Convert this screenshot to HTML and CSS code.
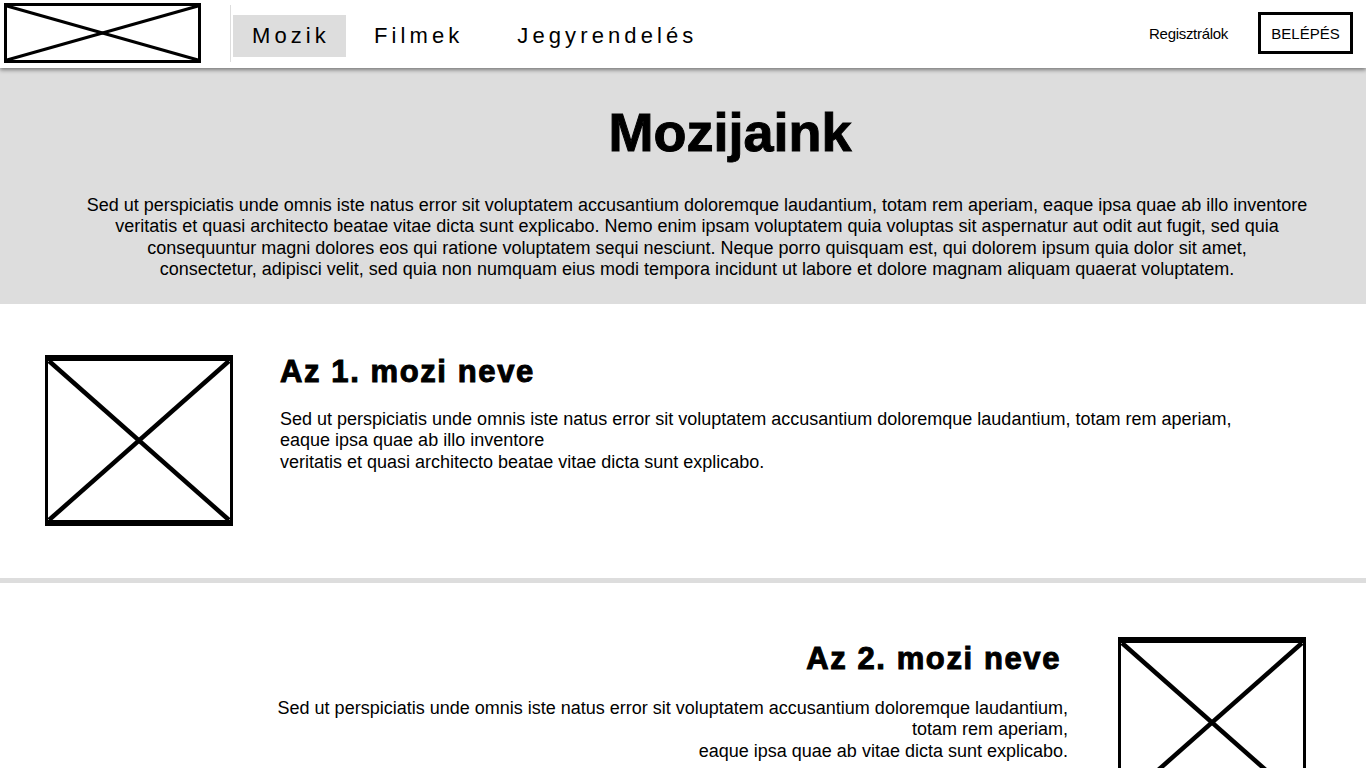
FILE: index.html
```html
<!DOCTYPE html>
<html lang="hu">
<head>
<meta charset="utf-8">
<title>Mozijaink</title>
<link rel="stylesheet" href="styles.css">
</head>
<body>
<header class="topbar">
  <div class="logo">
    <svg width="197" height="60" viewBox="0 0 197 60">
      <rect x="1.5" y="1.5" width="194" height="57" fill="#fff" stroke="#000" stroke-width="3"/>
      <line x1="3" y1="3" x2="194" y2="57" stroke="#000" stroke-width="3"/>
      <line x1="194" y1="3" x2="3" y2="57" stroke="#000" stroke-width="3"/>
    </svg>
  </div>
  <div class="sep"></div>
  <nav class="nav">
    <a class="nav-item active">Mozik</a>
    <a class="nav-item">Filmek</a>
    <a class="nav-item nav-item--far">Jegyrendelés</a>
  </nav>
  <div class="auth">
    <a class="register">Regisztrálok</a>
    <a class="login">BELÉPÉS</a>
  </div>
</header>

<section class="hero">
  <h1 class="hero-title">Mozijaink</h1>
  <p class="hero-text">Sed ut perspiciatis unde omnis iste natus error sit voluptatem accusantium doloremque laudantium, totam rem aperiam, eaque ipsa quae ab illo inventore<br>veritatis et quasi architecto beatae vitae dicta sunt explicabo. Nemo enim ipsam voluptatem quia voluptas sit aspernatur aut odit aut fugit, sed quia<br>consequuntur magni dolores eos qui ratione voluptatem sequi nesciunt. Neque porro quisquam est, qui dolorem ipsum quia dolor sit amet,<br>consectetur, adipisci velit, sed quia non numquam eius modi tempora incidunt ut labore et dolore magnam aliquam quaerat voluptatem.</p>
</section>

<section class="cinema">
  <div class="pic">
    <svg width="188" height="171" viewBox="0 0 188 171">
      <rect x="0" y="0" width="188" height="171" fill="#fff"/>
      <line x1="4" y1="6" x2="184" y2="165" stroke="#000" stroke-width="4.5"/>
      <line x1="184" y1="6" x2="4" y2="165" stroke="#000" stroke-width="4.5"/>
      <rect x="0" y="0" width="188" height="6" fill="#000"/>
      <rect x="0" y="165" width="188" height="6" fill="#000"/>
      <rect x="0" y="0" width="3" height="171" fill="#000"/>
      <rect x="185" y="0" width="3" height="171" fill="#000"/>
    </svg>
  </div>
  <div class="cinema-text">
    <h2 class="cinema-title">Az 1. mozi neve</h2>
    <p class="cinema-desc">Sed ut perspiciatis unde omnis iste natus error sit voluptatem accusantium doloremque laudantium, totam rem aperiam, eaque ipsa quae ab illo inventore<br>veritatis et quasi architecto beatae vitae dicta sunt explicabo.</p>
  </div>
</section>

<div class="divider"></div>

<section class="cinema cinema--reverse">
  <div class="cinema-text">
    <h2 class="cinema-title">Az 2. mozi neve</h2>
    <p class="cinema-desc">Sed ut perspiciatis unde omnis iste natus error sit voluptatem accusantium doloremque laudantium, totam rem aperiam,<br>eaque ipsa quae ab vitae dicta sunt explicabo.</p>
  </div>
  <div class="pic">
    <svg width="188" height="171" viewBox="0 0 188 171">
      <rect x="0" y="0" width="188" height="171" fill="#fff"/>
      <line x1="4" y1="6" x2="184" y2="165" stroke="#000" stroke-width="4.5"/>
      <line x1="184" y1="6" x2="4" y2="165" stroke="#000" stroke-width="4.5"/>
      <rect x="0" y="0" width="188" height="6" fill="#000"/>
      <rect x="0" y="165" width="188" height="6" fill="#000"/>
      <rect x="0" y="0" width="3" height="171" fill="#000"/>
      <rect x="185" y="0" width="3" height="171" fill="#000"/>
    </svg>
  </div>
</section>
</body>
</html>
```

FILE: styles.css
```css
* { box-sizing: border-box; }

html, body {
  margin: 0;
  padding: 0;
  background: #fff;
  color: #000;
  font-family: "Liberation Sans", Arial, sans-serif;
}

.topbar {
  position: relative;
  z-index: 2;
  height: 68px;
  background: #fff;
  display: flex;
  align-items: flex-start;
  box-shadow: 0 2px 4px rgba(0, 0, 0, 0.45);
}

.logo {
  margin: 3px 0 0 4px;
  height: 60px;
}
.logo svg { display: block; }

.sep {
  width: 1px;
  height: 57px;
  margin: 5px 0 0 29px;
  background: #ddd;
}

.nav {
  display: flex;
  gap: 9px;
  margin: 15px 0 0 2px;
}

.nav-item {
  display: flex;
  align-items: center;
  height: 42px;
  padding: 0 16px 0 19px;
  font-size: 22px;
  letter-spacing: 4.1px;
  color: #000;
  cursor: pointer;
}
.nav-item.active { background: #ddd; }
.nav-item--far { margin-left: 10px; }

.auth {
  margin-left: auto;
  display: flex;
  align-items: center;
  gap: 30px;
  height: 42px;
  margin-top: 12px;
  margin-right: 13px;
}

.register {
  font-size: 15px;
  color: #000;
  letter-spacing: -0.3px;
}

.login {
  display: flex;
  align-items: center;
  justify-content: center;
  width: 95px;
  height: 42px;
  border: 3px solid #000;
  font-size: 15px;
  color: #000;
}

.hero {
  background: #ddd;
  padding: 37px 52px 23px 80px;
  text-align: center;
}

.hero-title {
  margin: 0 0 36px 66px;
  font-size: 54px;
  line-height: 54px;
  font-weight: bold;
  -webkit-text-stroke: 1px #000;
}

.hero-text {
  margin: 0;
  font-size: 18px;
  line-height: 21.4px;
}

.cinema {
  display: flex;
  align-items: flex-start;
  height: 274px;
  padding: 51px 0 0 45px;
  gap: 47px;
}

.pic svg { display: block; }

.cinema-text {
  width: 970px;
  padding-top: 2px;
}

.cinema-title {
  margin: 0;
  font-size: 31px;
  line-height: 30px;
  font-weight: bold;
  letter-spacing: 1.6px;
  -webkit-text-stroke: 1px #000;
}

.cinema-desc {
  margin: 22px 0 0;
  font-size: 18px;
  line-height: 21.5px;
}

.divider {
  height: 5px;
  background: #ddd;
}

.cinema--reverse {
  justify-content: flex-end;
  padding: 54px 60px 0 0;
  gap: 50px;
}

.cinema--reverse .cinema-text {
  width: 810px;
  text-align: right;
  padding-top: 7px;
}

.cinema--reverse .cinema-title { padding-right: 7px; }
.cinema--reverse .cinema-desc { margin-top: 24px; }
```
